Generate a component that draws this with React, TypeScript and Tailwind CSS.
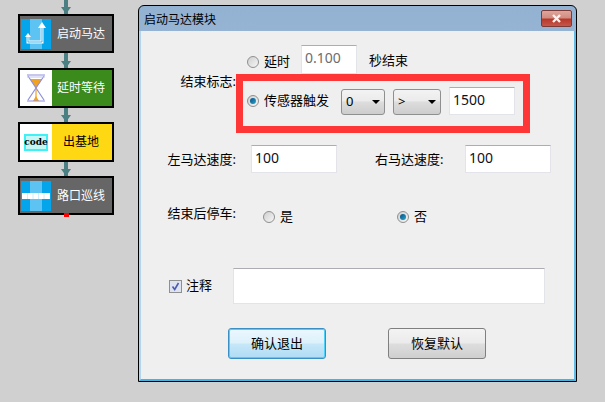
const uiFont = { fontFamily: '"Noto Sans", "Noto Sans CJK SC", sans-serif' }

function Connector({ height }: { height: number }) {
  return (
    <svg width="12" height={height} viewBox={`0 0 12 ${height}`} className="block shrink-0 self-center">
      <rect x="4" y="0" width="4" height={height} fill="#4a7f83" />
      <polygon points={`1,${height - 7} 11,${height - 7} 6,${height}`} fill="#4a7f83" />
    </svg>
  )
}

function TurnIcon() {
  return (
    <svg width="30" height="30" viewBox="0 0 30 30" className="block">
      <rect width="30" height="30" fill="#05a5ec" />
      <rect x="9" width="12" height="30" fill="#5cc3f2" />
      <path d="M7 17v6h14V8" fill="none" stroke="#fff" strokeWidth="3" />
      <path d="M7 17v6h14V8" fill="none" stroke="#3db5ee" strokeWidth="1" />
      <polygon points="17,9 21,3 25,9" fill="#fff" />
      <polygon points="4,18 7,14 10,18" fill="#fff" />
    </svg>
  )
}

function LineIcon() {
  return (
    <svg width="30" height="30" viewBox="0 0 30 30" className="block">
      <rect width="30" height="30" fill="#05a5ec" />
      <rect x="9" width="12" height="30" fill="#5cc3f2" />
      <rect x="1" y="12" width="28" height="6" fill="#fff" />
      <path d="M6.5 12v6M12 12v6M17.5 12v6M23 12v6" stroke="#cfeefc" strokeWidth="1" />
    </svg>
  )
}

function Hourglass() {
  return (
    <svg width="20" height="28" viewBox="0 0 20 28" className="block">
      <polygon points="4,5 16,5 10,14" fill="#f2a21e" />
      <polygon points="7,27 13,27 10,22" fill="#f2a21e" />
      <rect x="9.4" y="13" width="1.2" height="11" fill="#f2a21e" />
      <path d="M1 1h18M1 27h18M2 2l16 24M18 2L2 26" stroke="#8f8fdc" strokeWidth="1.2" fill="none" />
      <path d="M1 3h18" stroke="#c4c4ee" strokeWidth="1" />
    </svg>
  )
}

function CodeIcon() {
  return (
    <div
      className="flex h-[17px] w-[24px] items-center justify-center border-2 border-[#3ff0f5] bg-[#c6f7f7] text-[9px] leading-none font-bold text-black"
      style={{ fontFamily: '"DejaVu Serif", serif' }}
    >
      code
    </div>
  )
}

function Block({ icon, label, className, iconBg, textColor, marker }: { icon: React.ReactNode; label: string; className: string; iconBg: string; textColor: string; marker?: boolean }) {
  return (
    <div className={`relative flex w-[96px] shrink-0 border-2 border-black ${className}`}>
      <div className={`flex w-[32px] items-center justify-center ${iconBg}`}>{icon}</div>
      <div className={`flex flex-1 items-center justify-center pr-[2px] text-[12px] ${textColor}`}>{label}</div>
      {marker && <div className="absolute top-[35px] left-[44px] h-[4px] w-[5px] bg-[#ff0000]" />}
    </div>
  )
}

function Radio({ checked }: { checked?: boolean }) {
  return (
    <div className="flex h-[12px] w-[12px] shrink-0 items-center justify-center rounded-full border border-[#8e8f8f] bg-gradient-to-br from-[#cfcfcf] to-[#f6f6f6]">
      {checked && <div className="h-[6px] w-[6px] rounded-full bg-gradient-to-br from-[#0b4f86] to-[#27a6c9]" />}
    </div>
  )
}

function Field({ value, className, muted }: { value: string; className: string; muted?: boolean }) {
  return (
    <div className={`flex items-center border border-[#e3e4ea] border-t-[#abadb3] bg-white pb-[3px] pl-[3px] text-[14px] ${muted ? "text-[#6d6d6d]" : "text-[#10101a]"} ${className}`}>
      {value}
    </div>
  )
}

function Dropdown({ value, className }: { value: string; className: string }) {
  return (
    <div className={`flex h-[26px] items-center justify-between rounded-[3px] border border-[#8e8f8f] bg-[linear-gradient(#f3f3f3,#ebebeb_45%,#dddddd_50%,#cdcdcd)] pr-[4px] pl-[4px] text-[13px] text-black ${className}`}>
      <span>{value}</span>
      <span className="h-0 w-0 border-x-[4px] border-t-[4px] border-x-transparent border-t-black" />
    </div>
  )
}

function DialogButton({ label, primary }: { label: string; primary?: boolean }) {
  return (
    <div
      className={`flex h-[31px] w-[98px] items-center justify-center rounded-[3px] text-[13px] text-black ${
        primary
          ? "border border-[#3a8fc4] bg-[linear-gradient(#ebf7fe,#ddf1fb_48%,#c6e7f8_52%,#afdcf4)] shadow-[inset_0_0_0_1px_#4fd0f8]"
          : "border border-[#7f7f7f] bg-[linear-gradient(#f3f3f3,#ebebeb_48%,#dddddd_52%,#cfcfcf)]"
      }`}
    >
      {label}
    </div>
  )
}

export default function App() {
  return (
    <div className="flex h-[402px] w-[605px] overflow-hidden bg-[#d0d0d0]" style={uiFont}>
      {/* flow chart column */}
      <div className="ml-[18px] flex w-[96px] flex-col">
        <Connector height={14} />
        <Block icon={<TurnIcon />} label="启动马达" className="h-[39px] bg-[#666666]" iconBg="" textColor="text-white" />
        <Connector height={15} />
        <Block icon={<Hourglass />} label="延时等待" className="h-[40px] bg-[#3a8a1c]" iconBg="bg-white" textColor="text-white" />
        <Connector height={14} />
        <Block icon={<CodeIcon />} label="出基地" className="h-[40px] bg-[#ffd814]" iconBg="bg-white" textColor="text-black" />
        <Connector height={14} />
        <Block icon={<LineIcon />} label="路口巡线" className="h-[39px] bg-[#666666]" iconBg="" textColor="text-white" marker />
      </div>

      {/* dialog */}
      <div className="mt-[5px] ml-[24px] flex h-[377px] w-[439px] flex-col rounded-t-[6px] border border-black bg-gradient-to-b from-[#93b1d1] to-[#b6d0ea]">
        <div className="flex h-[25px] shrink-0 items-start justify-between pr-[4px] pl-[5px]">
          <span className="mt-[6px] text-[12px] leading-[16px] text-black">启动马达模块</span>
          <div className="mt-[4px] flex h-[17px] w-[31px] items-center justify-center rounded-[2px] border border-[#7a3a36] bg-[linear-gradient(#dfa59c,#d08d82_45%,#b8382b_55%,#c4564a)]">
            <svg width="11" height="9" viewBox="0 0 11 9">
              <path d="M2 1l7 7M9 1L2 8" stroke="#f4f4f4" strokeWidth="2.4" />
            </svg>
          </div>
        </div>

        <div className="flex flex-1 flex-col border-x-2 border-b-2 border-r-[#62bde6] border-b-[#45b4e2] border-l-[#b3d5f0] bg-[#efefef] text-[13px] text-black">
          {/* end condition */}
          <div className="mt-[14px] flex">
            <div className="mt-[27px] w-[95px] text-right leading-[18px]">结束标志:</div>
            <div className="flex flex-col">
              <div className="flex h-[29px] items-center pl-[11px]">
                <div className="mt-[5px] flex items-center">
                  <Radio />
                  <span className="ml-[5px] w-[26px]">延时</span>
                </div>
                <Field value="0.100" muted className="mt-[-1px] ml-[11px] h-[29px] w-[56px]" />
                <span className="mt-[2px] ml-[12px]">秒结束</span>
              </div>
              <div className="flex h-[59px] w-[294px] items-center border-[7px] border-[#ff3636] pr-[8px] pb-[6px] pl-[4px]">
                <Radio checked />
                <span className="ml-[5px] w-[65px]">传感器触发</span>
                <Dropdown value="0" className="mt-[2px] ml-[12px] w-[44px]" />
                <Dropdown value=">" className="mt-[2px] ml-[8px] w-[48px]" />
                <Field value="1500" className="ml-[8px] h-[28px] w-[66px]" />
              </div>
            </div>
          </div>

          {/* motor speeds */}
          <div className="mt-[12px] flex h-[28px] items-center">
            <span className="mt-[1px] w-[95px] text-right whitespace-nowrap">左马达速度:</span>
            <Field value="100" className="ml-[15px] h-[28px] w-[86px]" />
            <span className="mt-[1px] ml-[38px] w-[68px] whitespace-nowrap">右马达速度:</span>
            <Field value="100" className="ml-[22px] h-[28px] w-[86px]" />
          </div>

          {/* stop after end */}
          <div className="mt-[34px] flex h-[20px] items-center">
            <span className="mb-[6px] w-[95px] text-right whitespace-nowrap">结束后停车:</span>
            <div className="ml-[27px] flex w-[134px] items-center">
              <Radio />
              <span className="ml-[5px]">是</span>
            </div>
            <Radio checked />
            <span className="ml-[5px]">否</span>
          </div>

          {/* note */}
          <div className="mt-[41px] flex h-[36px] items-center pl-[28px]">
            <div className="flex h-[13px] w-[13px] items-center justify-center border border-[#8e8f8f] bg-[#dfe3f0]">
              <svg width="9" height="9" viewBox="0 0 9 9">
                <path d="M1.5 4.5l2.2 3L7.5 1" fill="none" stroke="#4a5bb0" strokeWidth="1.6" />
              </svg>
            </div>
            <span className="mb-[1px] ml-[4px] w-[47px]">注释</span>
            <div className="h-[36px] w-[312px] border border-[#e3e4ea] border-t-[#abadb3] bg-white" />
          </div>

          {/* actions */}
          <div className="mt-[24px] flex gap-[62px] pl-[87px]">
            <DialogButton label="确认退出" primary />
            <DialogButton label="恢复默认" />
          </div>
        </div>
      </div>
    </div>
  )
}
